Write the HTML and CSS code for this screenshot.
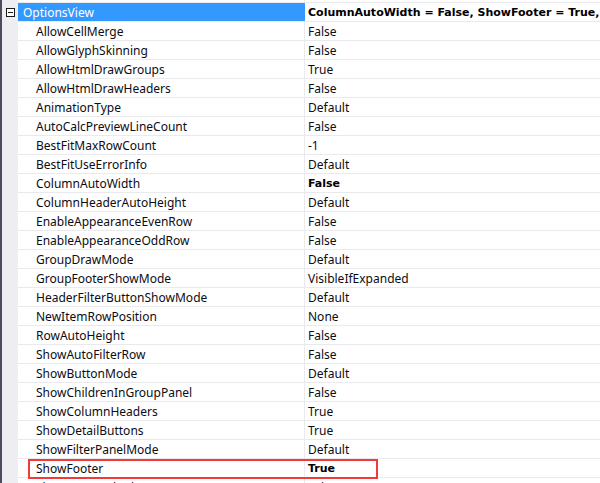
FILE: index.html
```
<!DOCTYPE html>
<html>
<head>
<meta charset="utf-8">
<link rel="stylesheet" href="styles.css">
</head>
<body>
<div class="frame">
  <div class="gutter"><div class="toggle"></div></div>
  <div class="rows">
    <div class="row spacer"><div class="name"></div><div class="value"></div></div>
    <div class="row head"><div class="name">OptionsView</div><div class="value bold">ColumnAutoWidth = False, ShowFooter = True, ShowGroupPanel = False</div></div>
    <div class="row"><div class="name">AllowCellMerge</div><div class="value">False</div></div>
    <div class="row"><div class="name">AllowGlyphSkinning</div><div class="value">False</div></div>
    <div class="row"><div class="name">AllowHtmlDrawGroups</div><div class="value">True</div></div>
    <div class="row"><div class="name">AllowHtmlDrawHeaders</div><div class="value">False</div></div>
    <div class="row"><div class="name">AnimationType</div><div class="value">Default</div></div>
    <div class="row"><div class="name">AutoCalcPreviewLineCount</div><div class="value">False</div></div>
    <div class="row"><div class="name">BestFitMaxRowCount</div><div class="value">-1</div></div>
    <div class="row"><div class="name">BestFitUseErrorInfo</div><div class="value">Default</div></div>
    <div class="row"><div class="name">ColumnAutoWidth</div><div class="value bold">False</div></div>
    <div class="row"><div class="name">ColumnHeaderAutoHeight</div><div class="value">Default</div></div>
    <div class="row"><div class="name">EnableAppearanceEvenRow</div><div class="value">False</div></div>
    <div class="row"><div class="name">EnableAppearanceOddRow</div><div class="value">False</div></div>
    <div class="row"><div class="name">GroupDrawMode</div><div class="value">Default</div></div>
    <div class="row"><div class="name">GroupFooterShowMode</div><div class="value">VisibleIfExpanded</div></div>
    <div class="row"><div class="name">HeaderFilterButtonShowMode</div><div class="value">Default</div></div>
    <div class="row"><div class="name">NewItemRowPosition</div><div class="value">None</div></div>
    <div class="row"><div class="name">RowAutoHeight</div><div class="value">False</div></div>
    <div class="row"><div class="name">ShowAutoFilterRow</div><div class="value">False</div></div>
    <div class="row"><div class="name">ShowButtonMode</div><div class="value">Default</div></div>
    <div class="row"><div class="name">ShowChildrenInGroupPanel</div><div class="value">False</div></div>
    <div class="row"><div class="name">ShowColumnHeaders</div><div class="value">True</div></div>
    <div class="row"><div class="name">ShowDetailButtons</div><div class="value">True</div></div>
    <div class="row"><div class="name">ShowFilterPanelMode</div><div class="value">Default</div></div>
    <div class="row"><div class="name">ShowFooter</div><div class="value bold">True</div></div>
    <div class="row"><div class="name">ShowGroupedColumns</div><div class="value">False</div></div>
  </div>
  <div class="highlight"></div>
</div>
</body>
</html>
```
FILE: styles.css
```
html, body {
  margin: 0;
  padding: 0;
  background: #ffffff;
  overflow: hidden;
}
.frame {
  position: relative;
  display: flex;
  width: 600px;
  height: 483px;
  overflow: hidden;
  font-family: "Noto Sans", "Noto Sans CJK SC", sans-serif;
  font-size: 12px;
  color: #0c0c14;
}
.gutter {
  width: 16px;
  flex: none;
  border-left: 2px solid #4c4c5e;
  background: #ededf2;
  padding-top: 8px;
  box-sizing: content-box;
}
.toggle {
  position: relative;
  width: 7px;
  height: 7px;
  margin-left: 4px;
  border: 1px solid #1a1a1a;
  background: #ffffff;
}
.toggle::after {
  content: "";
  position: absolute;
  left: 1px;
  top: 3px;
  width: 5px;
  height: 1px;
  background: #1a1a1a;
}
.rows {
  flex: 1;
  display: flex;
  flex-direction: column;
}
.row {
  display: grid;
  grid-template-columns: 287px 1fr;
  height: 18px;
  flex: none;
  border-bottom: 1px solid #e9e9ee;
  white-space: nowrap;
}
.row.spacer {
  height: 2px;
}
.name,
.value {
  line-height: 16px;
  padding-top: 2px;
  overflow: hidden;
}
.name {
  border-right: 1px solid #e9e9ee;
  padding-left: 18px;
}
.value {
  padding-left: 3px;
}
.row.spacer .name,
.row.spacer .value {
  padding-top: 0;
  line-height: 2px;
}
.row.head .name {
  background: #3399ff;
  color: #ffffff;
  padding-left: 5px;
  border-right-color: #3399ff;
}
.bold {
  font-family: "DejaVu Sans", sans-serif;
  font-weight: bold;
  font-size: 11px;
  color: #000000;
}
.highlight {
  position: absolute;
  left: 28px;
  top: 459px;
  width: 346px;
  height: 16px;
  border: 2px solid #f23a3a;
}
```
